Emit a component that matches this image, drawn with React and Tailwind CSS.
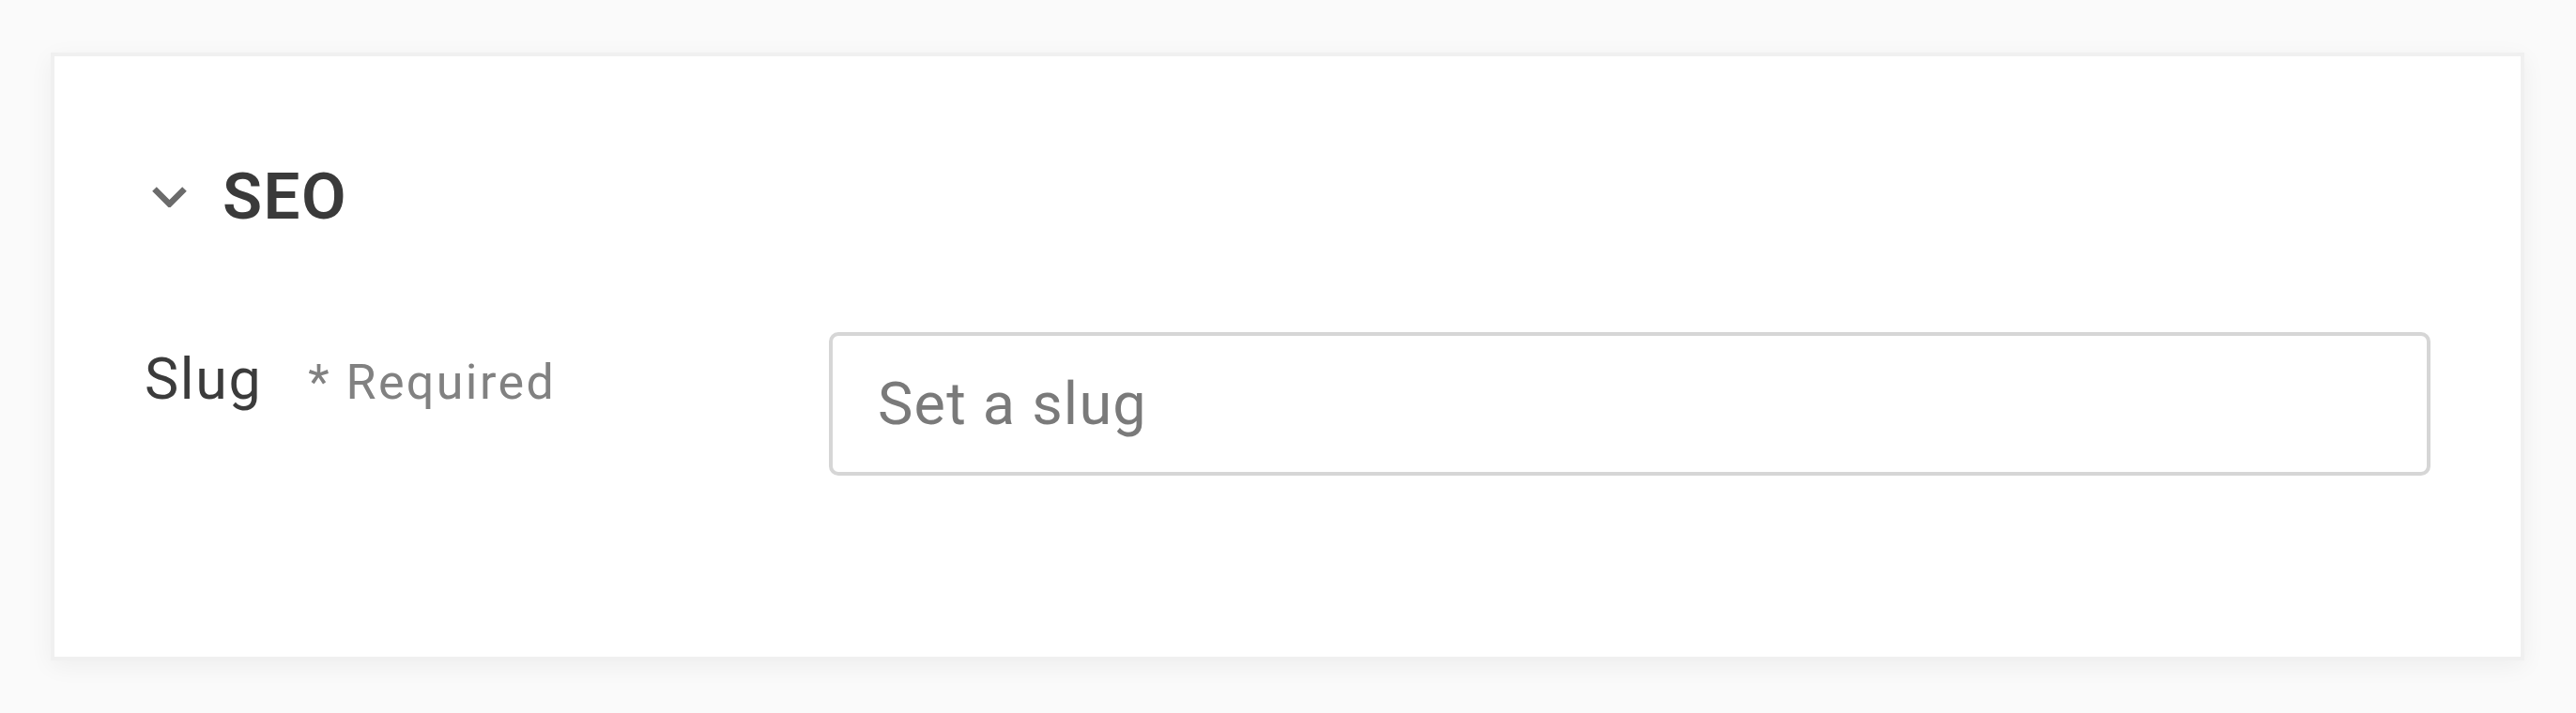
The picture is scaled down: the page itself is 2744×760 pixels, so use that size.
import React from 'react';

const ChevronDown = () => (
  <svg width="37" height="22" viewBox="0 0 37 22" fill="none" className="shrink-0">
    <path d="M2.5 2.5 L18.5 18.5 L34.5 2.5" stroke="#6b6b6b" strokeWidth="6.5" strokeLinejoin="miter" />
  </svg>
);

const FieldLabel = ({ label, required }) => (
  <div className="w-[729px] shrink-0 pt-[14px] flex items-baseline gap-[49px]">
    <span className="text-[61px] leading-[72px] tracking-[1.6px] text-[#3b3b3b]">{label}</span>
    {required && (
      <span className="text-[52px] leading-[72px] tracking-[2.4px] text-[#818181]">* Required</span>
    )}
  </div>
);

const App = () => {
  return (
    <div
      className="w-[2744px] h-[760px] bg-[#fafafa] pt-[56px] pl-[54px]"
      style={{ fontFamily: 'Roboto, "Helvetica Neue", Arial, sans-serif' }}
    >
      <section className="w-[2635px] h-[648px] bg-white border-4 border-[#f0f0f0] shadow-[0_6px_24px_rgba(0,0,0,0.05)] px-[96px] pt-[108px]">
        <header className="ml-[8px] flex items-center gap-[38px] h-[83px]">
          <ChevronDown />
          <h2 className="text-[69px] leading-[83px] font-semibold tracking-[1.5px] text-[#3a3a3a]">SEO</h2>
        </header>

        <div className="mt-[103px] flex items-start">
          <FieldLabel label="Slug" required />
          <input
            type="text"
            placeholder="Set a slug"
            className="flex-1 h-[153px] border-4 border-[#d6d6d6] rounded-[10px] px-[48px] text-[63px] tracking-[1.2px] text-[#3a3a3a] placeholder:text-[#7a7a7a] outline-none bg-white"
          />
        </div>
      </section>
    </div>
  );
};

export default App;
